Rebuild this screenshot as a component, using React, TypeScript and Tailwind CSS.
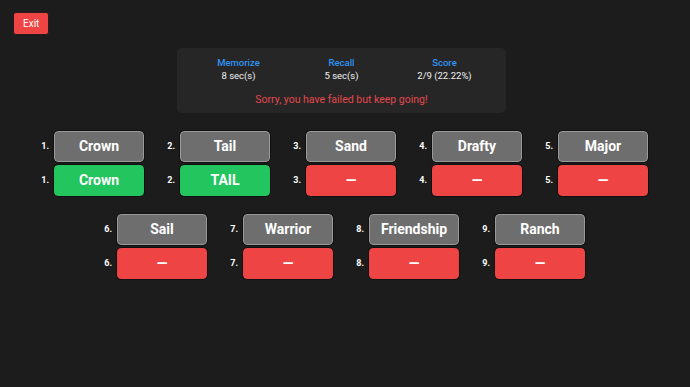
import React from 'react';

interface Word {
  shown: string;
  answer: string;
  correct: boolean;
}

const words: Word[] = [
  { shown: 'Crown', answer: 'Crown', correct: true },
  { shown: 'Tail', answer: 'TAIL', correct: true },
  { shown: 'Sand', answer: '—', correct: false },
  { shown: 'Drafty', answer: '—', correct: false },
  { shown: 'Major', answer: '—', correct: false },
  { shown: 'Sail', answer: '—', correct: false },
  { shown: 'Warrior', answer: '—', correct: false },
  { shown: 'Friendship', answer: '—', correct: false },
  { shown: 'Ranch', answer: '—', correct: false },
];

const stats = [
  { label: 'Memorize', value: '8 sec(s)' },
  { label: 'Recall', value: '5 sec(s)' },
  { label: 'Score', value: '2/9 (22.22%)' },
];

const App: React.FC = () => {
  return (
    <div
      className="min-h-screen bg-[#1c1c1c] text-white pl-[13px] pr-[20px] pt-[12px]"
      style={{ fontFamily: 'Roboto, "Liberation Sans", sans-serif' }}
    >
      <button className="block h-[23px] px-[9px] rounded-[3px] bg-[#ef4444] border border-[#2a1a1a] text-[10px] text-white">
        Exit
      </button>

      <div className="mx-auto mt-[13px] w-[329px] h-[65px] rounded-[5px] bg-[#262626] px-[10px] pt-[8px]">
        <div className="grid grid-cols-3">
          {stats.map((s) => (
            <div key={s.label} className="flex flex-col items-center">
              <span className="text-[9.5px] leading-[13px] font-medium text-[#2f95f5]">{s.label}</span>
              <span className="text-[9.5px] leading-[13px] text-[#f2f2f2]">{s.value}</span>
            </div>
          ))}
        </div>
        <p className="mt-[11px] text-center text-[10.5px] leading-[13px] text-[#e5484d]">
          Sorry, you have failed but keep going!
        </p>
      </div>

      <div className="mx-auto mt-[18px] w-[630px] flex flex-wrap justify-center gap-x-[17px] gap-y-[18px]">
        {words.map((w, i) => (
          <div key={i} className="flex flex-col gap-[3px]">
            <div className="flex items-center gap-[5px]">
              <span className="w-[14px] text-right text-[9px] font-bold">{i + 1}.</span>
              <div className="w-[90px] h-[31px] rounded-[4px] bg-[#6e6e6e] border border-[#9a9a9a] outline outline-1 outline-[#111] flex items-center justify-center text-[14px] font-bold">
                {w.shown}
              </div>
            </div>
            <div className="flex items-center gap-[5px]">
              <span className="w-[14px] text-right text-[9px] font-bold">{i + 1}.</span>
              <div
                className={
                  w.correct
                    ? 'w-[90px] h-[31px] rounded-[4px] bg-[#22c55e] outline outline-1 outline-[#111] flex items-center justify-center text-[14px] font-bold'
                    : 'w-[90px] h-[31px] rounded-[4px] bg-[#ef4444] outline outline-1 outline-[#111] flex items-center justify-center text-[14px] font-bold'
                }
              >
                {w.answer}
              </div>
            </div>
          </div>
        ))}
      </div>
    </div>
  );
};

export default App;
